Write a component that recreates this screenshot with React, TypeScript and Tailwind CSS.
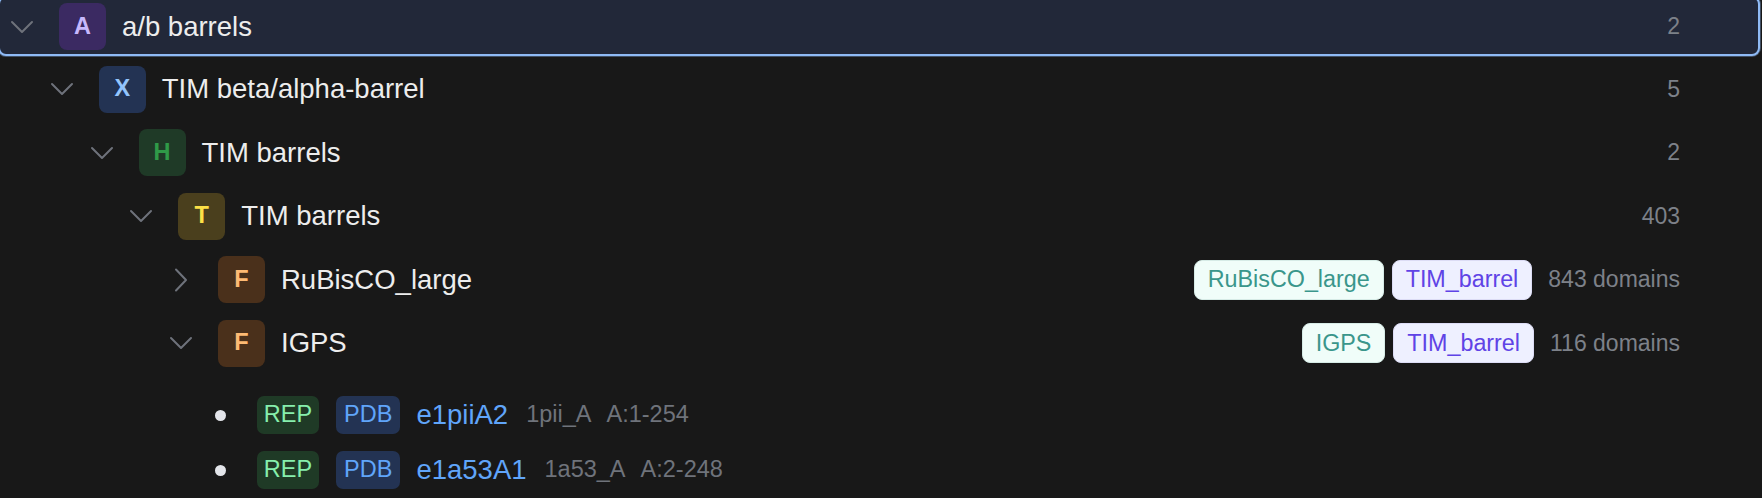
import React from 'react'

type Level = 0 | 1 | 2 | 3 | 4 | 5

interface TreeRow {
  level: Level
  letter: string
  badge: string
  title: string
  open: boolean
  count?: string
  tags?: { label: string; tone: 'teal' | 'violet' }[]
}

// padding per depth, one indent step is ~39.75px
const levelPad: Record<Level, string> = {
  0: 'pl-[4px]',
  1: 'pl-[43.75px]',
  2: 'pl-[83.5px]',
  3: 'pl-[123.25px]',
  4: 'pl-[163px]',
  5: 'pl-[202.75px]',
}

const rows: TreeRow[] = [
  { level: 1, letter: 'X', badge: 'bg-[#233353] text-[#93c5fd]', title: 'TIM beta/alpha-barrel', open: true, count: '5' },
  { level: 2, letter: 'H', badge: 'bg-[#1f3a27] text-[#2f9a48]', title: 'TIM barrels', open: true, count: '2' },
  { level: 3, letter: 'T', badge: 'bg-[#4a3f1d] text-[#fde047]', title: 'TIM barrels', open: true, count: '403' },
  {
    level: 4,
    letter: 'F',
    badge: 'bg-[#4a301b] text-[#fdba74]',
    title: 'RuBisCO_large',
    open: false,
    count: '843 domains',
    tags: [
      { label: 'RuBisCO_large', tone: 'teal' },
      { label: 'TIM_barrel', tone: 'violet' },
    ],
  },
  {
    level: 4,
    letter: 'F',
    badge: 'bg-[#4a301b] text-[#fdba74]',
    title: 'IGPS',
    open: true,
    count: '116 domains',
    tags: [
      { label: 'IGPS', tone: 'teal' },
      { label: 'TIM_barrel', tone: 'violet' },
    ],
  },
]

const domains = [
  { id: 'e1piiA2', pdb: '1pii_A', range: 'A:1-254' },
  { id: 'e1a53A1', pdb: '1a53_A', range: 'A:2-248' },
]

function Chevron({ open }: { open: boolean }) {
  return (
    <span className="w-[36px] flex items-center justify-center shrink-0">
      <svg width="24" height="24" viewBox="0 0 24 24" fill="none" stroke="#6e727b" strokeWidth="2" strokeLinecap="round" strokeLinejoin="round">
        {open ? <polyline points="2,7 12,17 22,7" /> : <polyline points="7,1.5 17,12 7,22.5" />}
      </svg>
    </span>
  )
}

function LetterBadge({ letter, className }: { letter: string; className: string }) {
  return (
    <span className={`ml-[19px] w-[47px] h-[47px] rounded-[8px] flex items-center justify-center shrink-0 text-[23.5px] font-bold ${className}`}>
      {letter}
    </span>
  )
}

function Tag({ label, tone }: { label: string; tone: 'teal' | 'violet' }) {
  const toneCls =
    tone === 'teal'
      ? 'bg-[#f0fdf9] text-[#3a968b] border-[#d6ebe6]'
      : 'bg-[#eef0ff] text-[#5f43e6] border-[#dcdcf5]'
  return (
    <span className={`h-[40px] px-[13px] rounded-[8px] border flex items-center text-[23.3px] ${toneCls}`}>{label}</span>
  )
}

export default function App() {
  return (
    <div
      className="w-full h-[498px] overflow-hidden bg-[#181818]"
      style={{ fontFamily: '"Liberation Sans", Arial, sans-serif' }}
    >
      {/* selected root row, scrolled slightly past the top edge */}
      <div className="-ml-[2px] mr-[2px] -mt-[4px] h-[60px] flex items-center pr-[78px] bg-[#222839] border-2 border-[#8fbaf5] rounded-[8px] shadow-[0_0_0_1px_rgba(143,186,245,0.35)]">
        <div className={`flex items-center pt-[1px] ${levelPad[0]}`}>
          <Chevron open />
          <LetterBadge letter="A" className="bg-[#3b2a62] text-[#c7b8fd]" />
          <span className="ml-[16px] text-[27.5px] text-[#ededed]">a/b barrels</span>
        </div>
        <span className="ml-auto text-[23px] text-[#7d8189]">2</span>
      </div>

      <div className="mt-[1.25px] mr-[2px]">
        {rows.map((row, i) => (
          <div key={i} className={`h-[63.5px] flex items-center pr-[80px] ${levelPad[row.level]}`}>
            <Chevron open={row.open} />
            <LetterBadge letter={row.letter} className={row.badge} />
            <span className="ml-[16px] text-[27.5px] text-[#ededed]">{row.title}</span>
            <div className="ml-auto flex items-center">
              {row.tags && (
                <div className="flex items-center gap-[8px] mr-[16px]">
                  {row.tags.map((t) => (
                    <Tag key={t.label + t.tone} label={t.label} tone={t.tone} />
                  ))}
                </div>
              )}
              <span className="text-[23px] text-[#7d8189]">{row.count}</span>
            </div>
          </div>
        ))}

        <div className="pt-[12.75px]">
          {domains.map((d) => (
            <div key={d.id} className={`h-[55px] flex items-center ${levelPad[5]}`}>
              <span className="w-[36px] flex items-center justify-center shrink-0">
                <span className="w-[11px] h-[11px] rounded-full bg-[#e3e5ea]" />
              </span>
              <span className="ml-[18px] h-[38px] px-[7px] rounded-[7px] flex items-center text-[23.5px] bg-[#1f3a26] text-[#86efac]">
                REP
              </span>
              <span className="ml-[17px] h-[38px] px-[8px] rounded-[7px] flex items-center text-[23.5px] bg-[#233353] text-[#60a5fa]">
                PDB
              </span>
              <span className="ml-[16px] text-[27.5px] text-[#60a5fa]">{d.id}</span>
              <span className="ml-[18px] text-[23.5px] text-[#6f737b]">{d.pdb}</span>
              <span className="ml-[15px] text-[23.5px] text-[#6f737b]">{d.range}</span>
            </div>
          ))}
        </div>
      </div>
    </div>
  )
}
